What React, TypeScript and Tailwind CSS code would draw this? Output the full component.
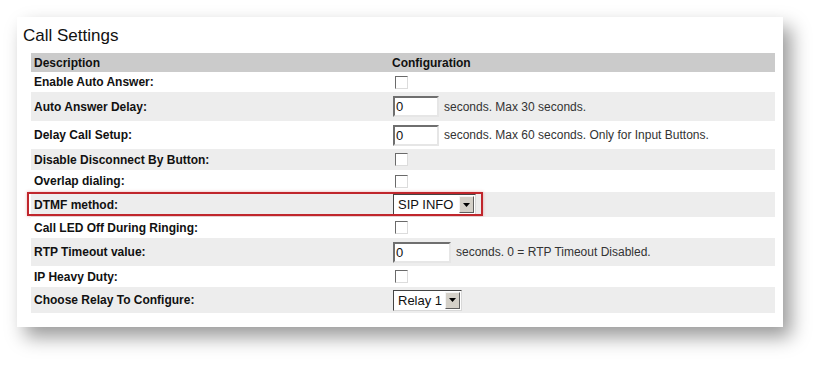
import React from "react"

type Row =
  | { label: string; kind: "check" }
  | { label: string; kind: "input"; note: string; w: string }
  | { label: string; kind: "select"; value: string; w: string; boxed?: boolean }

const rows: Row[] = [
  { label: "Enable Auto Answer:", kind: "check" },
  { label: "Auto Answer Delay:", kind: "input", note: "seconds. Max 30 seconds.", w: "w-[46px]" },
  { label: "Delay Call Setup:", kind: "input", note: "seconds. Max 60 seconds. Only for Input Buttons.", w: "w-[46px]" },
  { label: "Disable Disconnect By Button:", kind: "check" },
  { label: "Overlap dialing:", kind: "check" },
  { label: "DTMF method:", kind: "select", value: "SIP INFO", w: "w-[83px]", boxed: true },
  { label: "Call LED Off During Ringing:", kind: "check" },
  { label: "RTP Timeout value:", kind: "input", note: "seconds. 0 = RTP Timeout Disabled.", w: "w-[58px]" },
  { label: "IP Heavy Duty:", kind: "check" },
  { label: "Choose Relay To Configure:", kind: "select", value: "Relay 1", w: "w-[69px]" },
]

function Checkbox() {
  return (
    <span className="block h-[13px] w-[13px] border border-t-[#6a6a6a] border-l-[#6a6a6a] border-b-[#dcdcdc] border-r-[#dcdcdc] bg-white" />
  )
}

function Select({ value, w }: { value: string; w: string }) {
  return (
    <div className={`flex h-[21px] ${w} items-center border border-t-[#444] border-l-[#444] border-b-[#d8d8d8] border-r-[#d8d8d8] bg-white`}>
      <span className="flex-1 whitespace-nowrap pl-[4px] text-[13px] leading-none text-[#111]">{value}</span>
      <span className="mr-[1px] flex h-[17px] w-[15px] items-center justify-center border border-t-[#f4f4f4] border-l-[#f4f4f4] border-b-[#5e5e5e] border-r-[#5e5e5e] bg-[#d4d0c8]">
        <svg width="7" height="4" viewBox="0 0 7 4">
          <path d="M0 0h7L3.5 4z" fill="#000" />
        </svg>
      </span>
    </div>
  )
}

export default function App() {
  return (
    <div className="min-h-[376px] w-[831px] bg-white pl-[17px] pt-[17px] font-['Liberation_Sans',Arial,sans-serif]">
      <div className="h-[310px] w-[766px] bg-white pt-[9px] shadow-[8px_10px_18px_rgba(0,0,0,0.4)]">
        <h2 className="mb-[7px] pl-[6px] text-[17px] leading-[20px] text-[#111]">Call Settings</h2>

        <div className="ml-[14px] w-[744px] text-[12px]">
          {/* header */}
          <div className="flex h-[19px] items-center bg-[#cbcbcb] font-bold text-[#111]">
            <div className="w-[360px] pl-[3px]">Description</div>
            <div className="pl-[1px]">Configuration</div>
          </div>

          {rows.map((r, i) => {
            const h =
              r.kind === "check" ? (i === 0 ? "h-[20px]" : i === 4 ? "h-[22px]" : "h-[21px]") : r.kind === "input" ? (i === 1 ? "h-[29px]" : "h-[28px]") : i === 5 ? "h-[25px]" : "h-[26px]"
            return (
              <div key={r.label} className={`relative flex items-center ${h} ${i % 2 === 1 ? "bg-[#ededed]" : "bg-white"}`}>
                <div className="w-[360px] pl-[3px] font-bold text-[#111]">{r.label}</div>
                <div className="flex items-center">
                  {r.kind === "check" && (
                    <span className="ml-[4px]">
                      <Checkbox />
                    </span>
                  )}
                  {r.kind === "input" && (
                    <>
                      <input
                        readOnly
                        value="0"
                        className={`ml-[2px] h-[21px] ${r.w} border-2 border-t-[#6f6f6f] border-l-[#6f6f6f] border-b-[#e6e6e6] border-r-[#e6e6e6] bg-white pl-[1px] text-[13px] text-[#111] outline-none`}
                      />
                      <span className="ml-[5px] text-[12px] text-[#333]">{r.note}</span>
                    </>
                  )}
                  {r.kind === "select" && (
                    <span className="ml-[2px]">
                      <Select value={r.value} w={r.w} />
                    </span>
                  )}
                </div>
                {r.kind === "select" && r.boxed && (
                  <div className="pointer-events-none absolute left-[-4px] top-[0px] h-[24px] w-[456px] border-2 border-[#c0262c] shadow-[0_0_3px_rgba(192,38,44,0.35)]" />
                )}
              </div>
            )
          })}
        </div>
      </div>
    </div>
  )
}
